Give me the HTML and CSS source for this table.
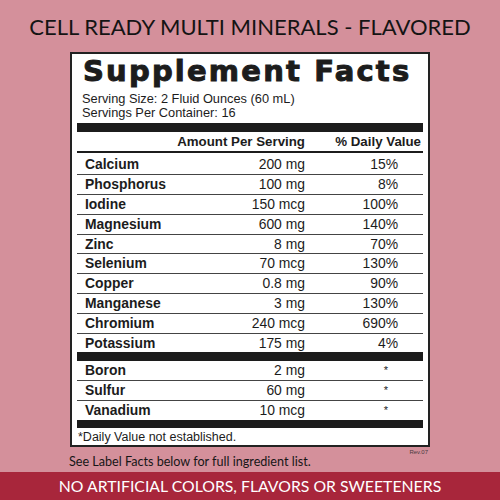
FILE: index.html
```html
<!DOCTYPE html>
<html lang="en">
<head>
    <meta charset="UTF-8">
    <meta name="viewport" content="width=device-width, initial-scale=1.0">
    <title>Cell Ready Multi Minerals - Flavored</title>
    <link rel="stylesheet" href="styles.css">
</head>
<body>

    <h1 class="product-title">CELL READY MULTI MINERALS - FLAVORED</h1>

    <!-- Panel de datos -->
    <div class="facts">
        <h2 class="facts-title">Supplement Facts</h2>
        <p class="serving">Serving Size: 2 Fluid Ounces (60 mL)<br>Servings Per Container: 16</p>

        <div class="bar"></div>
        <div class="facts-head">
            <span>Amount Per Serving</span>
            <span>% Daily Value</span>
        </div>

        <div class="group first">
            <div class="row"><span class="name">Calcium</span><span class="amt">200 mg</span><span class="dv">15%</span></div>
            <div class="row"><span class="name">Phosphorus</span><span class="amt">100 mg</span><span class="dv">8%</span></div>
            <div class="row"><span class="name">Iodine</span><span class="amt">150 mcg</span><span class="dv">100%</span></div>
            <div class="row"><span class="name">Magnesium</span><span class="amt">600 mg</span><span class="dv">140%</span></div>
            <div class="row"><span class="name">Zinc</span><span class="amt">8 mg</span><span class="dv">70%</span></div>
            <div class="row"><span class="name">Selenium</span><span class="amt">70 mcg</span><span class="dv">130%</span></div>
            <div class="row"><span class="name">Copper</span><span class="amt">0.8 mg</span><span class="dv">90%</span></div>
            <div class="row"><span class="name">Manganese</span><span class="amt">3 mg</span><span class="dv">130%</span></div>
            <div class="row"><span class="name">Chromium</span><span class="amt">240 mcg</span><span class="dv">690%</span></div>
            <div class="row"><span class="name">Potassium</span><span class="amt">175 mg</span><span class="dv">4%</span></div>
        </div>

        <div class="bar"></div>
        <div class="group">
            <div class="row"><span class="name">Boron</span><span class="amt">2 mg</span><span class="dv star">*</span></div>
            <div class="row"><span class="name">Sulfur</span><span class="amt">60 mg</span><span class="dv star">*</span></div>
            <div class="row"><span class="name">Vanadium</span><span class="amt">10 mcg</span><span class="dv star">*</span></div>
        </div>

        <div class="bar thin"></div>
        <p class="footnote">*Daily Value not established.</p>
    </div>

    <div class="below">
        <span class="see-label">See Label Facts below for full ingredient list.</span>
        <span class="rev">Rev.07</span>
    </div>

    <div class="banner">NO ARTIFICIAL COLORS, FLAVORS OR SWEETENERS</div>

</body>
</html>
```

FILE: styles.css
```css
/* General */
body {
    margin: 0;
    height: 500px;
    display: flex;
    flex-direction: column;
    background-color: #d4909b;
    font-family: "Liberation Sans", Arial, sans-serif;
    color: #1c1c1c;
}

.product-title {
    margin: 0;
    padding-top: 12px;
    font-family: Lato, sans-serif;
    font-weight: 400;
    font-size: 22px;
    line-height: 30px;
    text-align: center;
    color: #141414;
}

/* Supplement facts panel */
.facts {
    width: 346px;
    margin: 10px auto 0;
    padding: 0 5px;
    background-color: #fff;
    border: 2px solid #222;
}

.facts-title {
    margin: 3px 0 0 6px;
    font-family: "DejaVu Sans", sans-serif;
    font-weight: 700;
    font-size: 29px;
    line-height: 29px;
    letter-spacing: 2.2px;
    -webkit-text-stroke: 1px #1c1c1c;
}

.serving {
    margin: 6px 0 0 5px;
    font-size: 12.8px;
    line-height: 13.5px;
}

.bar {
    height: 9px;
    margin-top: 4px;
    background-color: #1c1c1c;
}

.bar.thin {
    height: 8px;
    margin-top: 0;
}

.facts-head {
    display: grid;
    grid-template-columns: 228px 1fr;
    height: 19px;
    line-height: 19px;
    padding-right: 2px;
    border-bottom: 2px solid #1c1c1c;
    font-weight: 700;
    font-size: 13.3px;
    text-align: right;
}

.group .row {
    display: grid;
    grid-template-columns: 120px 108px 93px 1fr;
    line-height: 18.8px;
    font-size: 13.9px;
    border-bottom: 1px solid #444;
}

.group .row:last-child {
    border-bottom: none;
}

.group.first {
    padding-top: 2.4px;
}

.group + .bar {
    margin-top: 0;
}

.name {
    padding-left: 8px;
    font-weight: 700;
}

.amt,
.dv {
    text-align: right;
}

.dv.star {
    padding-right: 10px;
    font-size: 11px;
}

.footnote {
    margin: 2px 0 0 1px;
    font-size: 12.5px;
    line-height: 15px;
}

/* Texto bajo el panel */
.below {
    display: flex;
    justify-content: space-between;
    width: 362px;
    margin: 0 auto;
}

.see-label {
    margin-top: 7px;
    font-family: Lato, sans-serif;
    font-size: 12.6px;
    line-height: 16px;
    color: #161616;
}

.rev {
    margin-top: 2px;
    margin-right: 3px;
    font-size: 6px;
    color: #4a3a3e;
}

.banner {
    margin-top: auto;
    height: 28px;
    line-height: 28px;
    background-color: #a8263b;
    color: #fff;
    font-family: Lato, sans-serif;
    font-size: 15.8px;
    text-align: center;
}
```
